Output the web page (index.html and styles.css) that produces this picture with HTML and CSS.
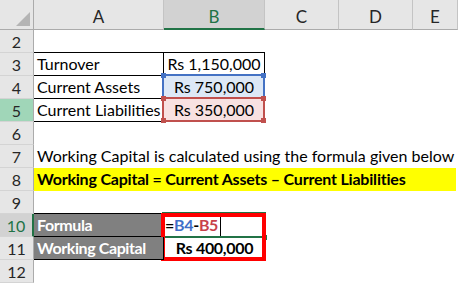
FILE: index.html
```html
<!DOCTYPE html>
<html>
<head>
<meta charset="utf-8">
<link rel="stylesheet" href="styles.css">
</head>
<body>
<div class="sheet">
  <div class="corner"><svg width="14" height="14" viewBox="0 0 14 14"><polygon points="14,0 14,14 0,14" fill="#b4b4b4"/></svg></div>
  <div class="ch">A</div>
  <div class="ch sel">B</div>
  <div class="ch">C</div>
  <div class="ch">D</div>
  <div class="ch">E</div>

  <div class="rh">2</div><div class="rest5"></div>

  <div class="rh">3</div>
  <div class="c ca tb top">Turnover</div>
  <div class="c cb tb top num">Rs 1,150,000</div>
  <div class="rest3"></div>

  <div class="rh">4</div>
  <div class="c ca tb">Current Assets</div>
  <div class="c cb tb num fill-blue">Rs 750,000
    <span class="ref ref-blue"></span>
    <i class="h h-blue tl"></i><i class="h h-blue tr"></i>
  </div>
  <div class="rest3"></div>

  <div class="rh rh-green">5</div>
  <div class="c ca tb">Current Liabilities</div>
  <div class="c cb tb num fill-red">Rs 350,000
    <span class="ref ref-red"></span>
    <i class="h h-red tl"></i><i class="h h-red tr"></i>
    <i class="h h-red bl"></i><i class="h h-red br"></i>
  </div>
  <div class="rest3"></div>

  <div class="rh">6</div><div class="rest5"></div>

  <div class="rh">7</div><div class="c rest5">Working Capital is calculated using the formula given below</div>

  <div class="rh">8</div><div class="rest5 hlrow"><span class="hl">Working Capital = Current Assets – Current Liabilities</span></div>

  <div class="rh">9</div><div class="rest5"></div>

  <div class="rh rh-act">10</div>
  <div class="c ca tb top dark">Formula</div>
  <div class="c cb formula"><span>=</span><span class="fb">B4</span><span>-</span><span class="fr">B5</span><span class="cursor"></span>
    <span class="active"></span><i class="handle"></i>
    <span class="redbox"></span>
  </div>
  <div class="rest3"></div>

  <div class="rh">11</div>
  <div class="c ca tb dark">Working Capital</div>
  <div class="c cb num bold">Rs 400,000</div>
  <div class="rest3"></div>

  <div class="rh">12</div><div class="rest5"></div>
</div>
</body>
</html>
```

FILE: styles.css
```css
* { box-sizing: border-box; }

body {
  margin: 0;
  background: #fff;
  font-family: Lato, "Open Sans", sans-serif;
  font-size: 16px;
  color: #000;
}

.sheet {
  display: grid;
  grid-template-columns: 34px 130px 101px 74px 74px 45px;
  grid-template-rows: 30px repeat(11, 23px);
  width: 458px;
  height: 283px;
  overflow: hidden;
}

.corner {
  background: #e6e6e6;
  border-right: 1px solid #ababab;
  border-bottom: 1px solid #ababab;
  display: flex;
  align-items: flex-end;
  justify-content: flex-end;
  padding: 0 3px 3px 0;
}
.corner svg { display: block; }

.ch {
  background: #e6e6e6;
  border-right: 1px solid #c4c4c4;
  border-bottom: 1px solid #ababab;
  text-align: center;
  padding-top: 5px;
  line-height: 23px;
  color: #262626;
  font-size: 17px;
}
.ch.sel {
  background: #d2d2d2;
  color: #217346;
  border-bottom: 2px solid #217346;
}

.rh {
  background: #e6e6e6;
  border-right: 1px solid #ababab;
  border-bottom: 1px solid #d4d4d4;
  text-align: center;
  line-height: 23px;
  color: #262626;
}
.rh-green { background: #a0d6b8; }
.rh-act {
  background: #d2d2d2;
  color: #217346;
  border-right: 2px solid #217346;
}

.rest5 { grid-column: span 5; }
.rest3 { grid-column: span 3; }

.c {
  line-height: 22px;
  padding-left: 3px;
  white-space: nowrap;
  position: relative;
}

.tb {
  border-right: 1px solid #000;
  border-bottom: 1px solid #000;
}
.top {
  margin-top: -1px;
  border-top: 1px solid #000;
}
.num { text-align: center; padding-left: 0; }
.bold { font-weight: 700; letter-spacing: -0.3px; }

.fill-blue { background: #dde8f6; }
.fill-red { background: #f8e1e1; }

.ref {
  position: absolute;
  top: -2px; left: -2px; right: -1px; bottom: -1px;
  border: 2px solid;
}
.ref-blue { border-color: #4472c4; }
.ref-red { border-color: #c0504d; }

.h {
  position: absolute;
  width: 5px;
  height: 5px;
}
.h-blue { background: #4472c4; }
.h-red { background: #c0504d; }
.tl { left: -3px; top: -3px; }
.tr { right: -2px; top: -3px; }
.bl { left: -3px; bottom: -2px; }
.br { right: -2px; bottom: -2px; }

.hlrow { padding-right: 2px; }
.hl {
  display: block;
  height: 100%;
  background: #ffff00;
  font-weight: 700;
  letter-spacing: -0.2px;
  line-height: 22px;
  padding-left: 3px;
  white-space: nowrap;
}

.dark {
  background: #808080;
  color: #fff;
  font-weight: 700;
  letter-spacing: -0.4px;
}

.formula {
  font-weight: 700;
  padding-left: 1px;
  letter-spacing: -0.3px;
}
.fb { color: #3f6fc9; }
.fr { color: #c8414b; }
.cursor {
  display: inline-block;
  width: 1px;
  height: 20px;
  background: #000;
  margin-left: 2px;
  vertical-align: -5px;
}

.active {
  position: absolute;
  top: -2px; left: -2px; right: -1px; bottom: -1px;
  border: 2px solid #217346;
}
.handle {
  position: absolute;
  right: -2px;
  bottom: -3px;
  width: 5px;
  height: 5px;
  background: #217346;
}
.redbox {
  position: absolute;
  left: -3px;
  top: -1px;
  right: -1px;
  height: 48px;
  border: 4px solid #ff0000;
}
```
